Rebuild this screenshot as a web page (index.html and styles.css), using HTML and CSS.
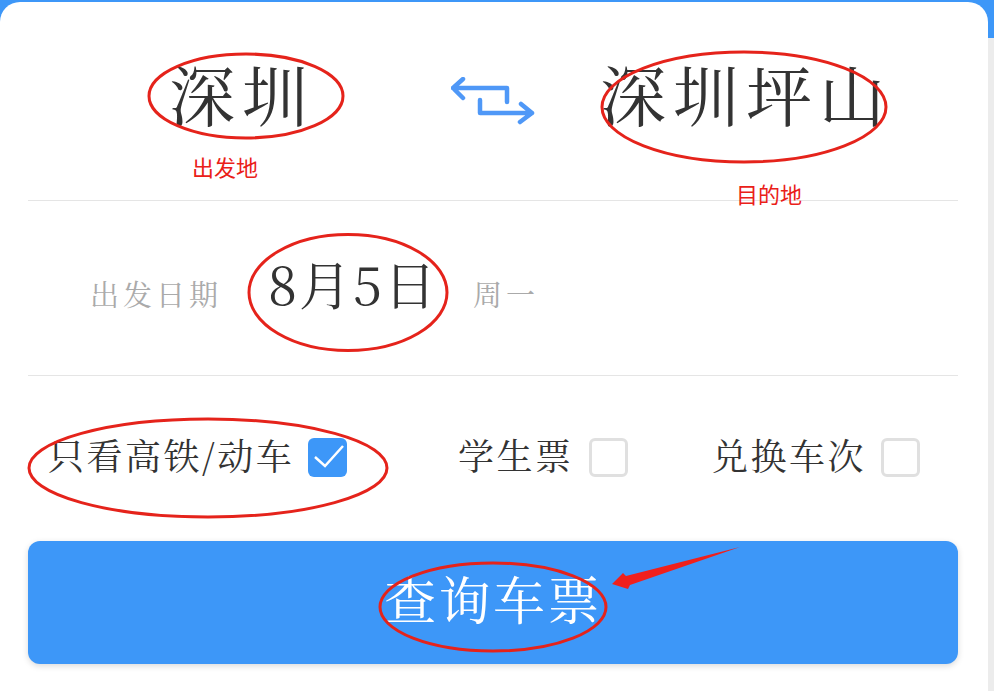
FILE: index.html
```html
<!DOCTYPE html>
<html lang="zh">
<head>
<meta charset="utf-8">
<title>车票查询</title>
<link rel="stylesheet" href="styles.css">
</head>
<body>
<main class="card">
  <section class="route">
    <div class="city city-from">深圳</div>
    <svg class="swap" width="86" height="50" viewBox="0 0 86 50" fill="none" stroke="#4f98f7" stroke-width="4.5" stroke-linecap="round" stroke-linejoin="round">
      <path d="M12 2 L2 11 L12 21 M2 11 H56 V25"/>
      <path d="M29 23 V36 H81 M70 27 L81 36 L69 45"/>
    </svg>
    <div class="city city-to">深圳坪山</div>
  </section>
  <section class="date">
    <span class="date-label">出发日期</span>
    <span class="date-value">8月5日</span>
    <span class="date-week">周一</span>
  </section>
  <section class="options">
    <label class="option option-a"><span class="option-text">只看高铁/动车</span>
      <span class="box checked"><svg width="39" height="39" viewBox="0 0 39 39" fill="none" stroke="#fff" stroke-width="2.5"><path d="M7 19 L17 28 L35 8"/></svg></span>
    </label>
    <label class="option option-b"><span class="option-text">学生票</span><span class="box"></span></label>
    <label class="option option-c"><span class="option-text">兑换车次</span><span class="box"></span></label>
  </section>
  <button class="submit">查询车票</button>
</main>
<svg class="marks" width="994" height="691" viewBox="0 0 994 691" fill="none" stroke="#e5231b" stroke-width="3">
  <ellipse cx="246" cy="96" rx="97" ry="42"/>
  <ellipse cx="744" cy="107" rx="142" ry="55"/>
  <ellipse cx="348" cy="292.500" rx="99" ry="58"/>
  <ellipse cx="208" cy="468" rx="179" ry="49"/>
  <ellipse cx="493" cy="607" rx="113" ry="44"/>
  <path class="arrow" d="M740 547 L630 585 L628 589 L612 584 L623 573 L626 576 Z"/>
</svg>
<span class="note note-from">出发地</span>
<span class="note note-to">目的地</span>
</body>
</html>
```
FILE: styles.css
```css
* { box-sizing: border-box; }
html, body { margin: 0; padding: 0; }
body {
  width: 994px;
  height: 691px;
  overflow: hidden;
  position: relative;
  background: linear-gradient(#3d97f8 0 38px, #ececec 38px);
  padding-top: 2px;
  font-family: "Noto Serif CJK SC", "Noto Sans CJK SC", serif;
  color: #333;
}
.card {
  position: relative;
  width: 988px;
  height: 689px;
  padding: 0 30px 0 28px;
  background: #fff;
  border-radius: 20px 20px 0 0;
}
.route {
  display: flex;
  align-items: flex-start;
  height: 199px;
  border-bottom: 1px solid #e5e5e5;
}
.city { font-size: 66px; letter-spacing: 7px; line-height: 80px; margin-top: 51px; white-space: nowrap; }
.city-from { margin-left: 141px; width: 282px; }
.swap { margin-top: 75px; }
.city-to { margin-left: 63px; }
.date {
  display: flex;
  align-items: center;
  height: 175px;
  padding-left: 62px;
  border-bottom: 1px solid #e5e5e5;
}
.date-label { font-size: 29px; letter-spacing: 4px; color: #aaa; width: 178px; margin-top: 10px; }
.date-value { font-size: 52px; letter-spacing: 2px; color: #333; width: 205px; margin-bottom: 12px; }
.date-week { font-size: 29px; letter-spacing: 4px; color: #aaa; margin-top: 10px; }
.options {
  display: flex;
  align-items: center;
  height: 165px;
}
.option { display: flex; align-items: center; font-size: 36px; letter-spacing: 2.5px; white-space: nowrap; }
.option-text { margin-bottom: 8px; }
.option-a { margin-left: 20px; width: 410px; }
.option-b { width: 254px; }
.box {
  width: 39px;
  height: 39px;
  margin-left: 15px;
  margin-bottom: 2px;
  border: 3px solid #e0e0e0;
  border-radius: 6px;
  background: #fff;
}
.box.checked { margin-left: 14px; border: 0; background: #3d97f8; }
.box svg { display: block; }
.submit {
  display: block;
  width: 930px;
  height: 123px;
  padding: 0 0 10px;
  border: 0;
  border-radius: 12px;
  background: #3d97f8;
  color: #fff;
  font: inherit;
  font-size: 52px;
  letter-spacing: 2.5px;
  box-shadow: 0 2px 6px rgba(0, 0, 0, .15);
}
.marks { position: absolute; left: 0; top: 0; pointer-events: none; }
.arrow { fill: #f0201c; stroke: none; }
.note { position: absolute; font-family: "Noto Sans CJK SC", sans-serif; font-size: 22px; line-height: 30px; color: #ea2018; }
.note-from { left: 192px; top: 151px; }
.note-to { left: 736px; top: 178px; }
```
